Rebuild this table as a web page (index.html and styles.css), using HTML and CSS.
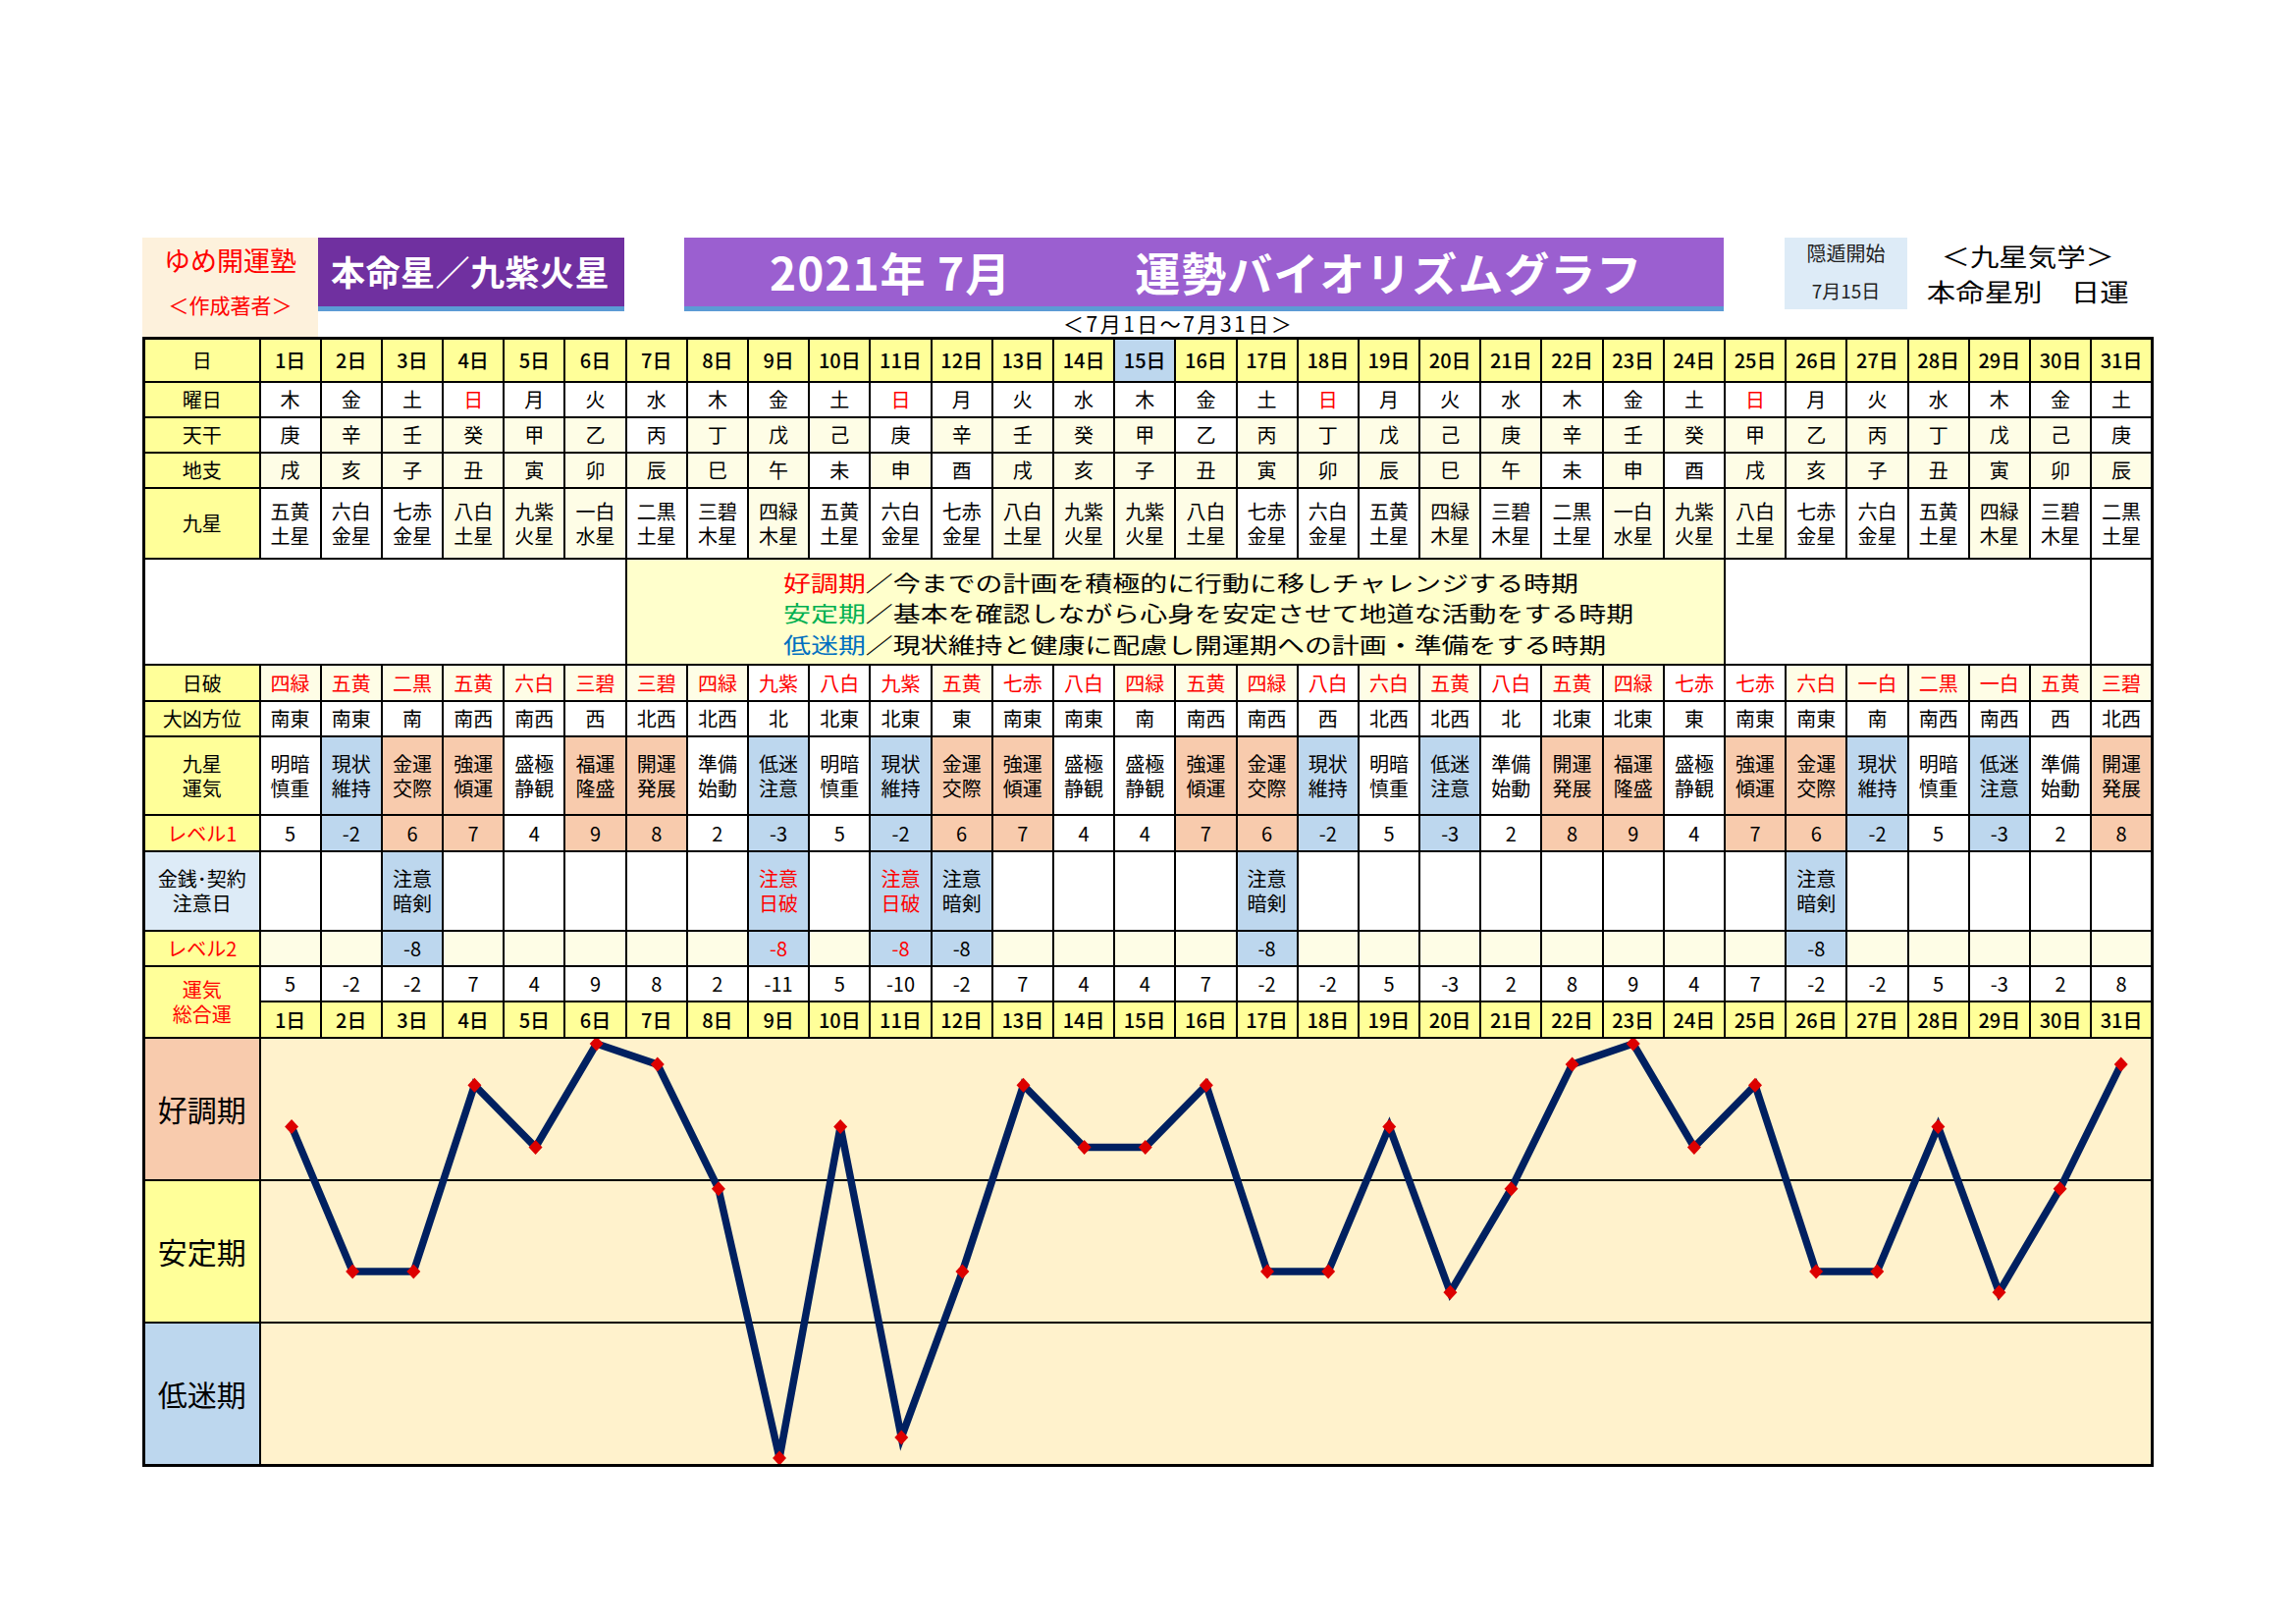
FILE: index.html
```html
<!DOCTYPE html>
<html lang="ja">
<head>
<meta charset="utf-8">
<title>運勢バイオリズムグラフ</title>
<link rel="stylesheet" href="styles.css">
</head>
<body>
<div class="page">
  <div class="header">
    <div class="author">
      <div class="author-name">ゆめ開運塾</div>
      <div class="author-sub">＜作成著者＞</div>
    </div>
    <div class="honmei">本命星／九紫火星</div>
    <div class="title">
      <div class="title-bar"><span class="t1">2021年 7月</span><span class="t2">運勢バイオリズムグラフ</span></div>
      <div class="subtitle">＜7月1日～7月31日＞</div>
    </div>
    <div class="inton">
      <div class="inton-1">隠遁開始</div>
      <div class="inton-2">7月15日</div>
    </div>
    <div class="kyusei">
      <div class="ky-line">＜九星気学＞</div>
      <div class="ky-line">本命星別　日運</div>
    </div>
  </div>

  <table class="grid">
    <colgroup><col class="lab-col"></colgroup>
    <tbody>
      <tr class="r-day">
        <th class="lab">日</th>
        <td>1日</td><td>2日</td><td>3日</td><td>4日</td><td>5日</td><td>6日</td><td>7日</td><td>8日</td><td>9日</td><td>10日</td>
        <td>11日</td><td>12日</td><td>13日</td><td>14日</td><td class="today">15日</td><td>16日</td><td>17日</td><td>18日</td><td>19日</td><td>20日</td>
        <td>21日</td><td>22日</td><td>23日</td><td>24日</td><td>25日</td><td>26日</td><td>27日</td><td>28日</td><td>29日</td><td>30日</td><td>31日</td>
      </tr>
      <tr class="r-36">
        <th class="lab">曜日</th>
        <td>木</td><td>金</td><td>土</td><td class="red">日</td><td>月</td><td>火</td><td>水</td><td>木</td><td>金</td><td>土</td>
        <td class="red">日</td><td>月</td><td>火</td><td>水</td><td>木</td><td>金</td><td>土</td><td class="red">日</td><td>月</td><td>火</td>
        <td>水</td><td>木</td><td>金</td><td>土</td><td class="red">日</td><td>月</td><td>火</td><td>水</td><td>木</td><td>金</td><td>土</td>
      </tr>
      <tr class="r-36">
        <th class="lab">天干</th>
        <td>庚</td><td class="c">辛</td><td class="c">壬</td><td class="c">癸</td><td class="c">甲</td><td class="c">乙</td><td>丙</td><td class="c">丁</td><td class="c">戊</td><td class="c">己</td>
        <td>庚</td><td class="c">辛</td><td class="c">壬</td><td class="c">癸</td><td class="c">甲</td><td>乙</td><td class="c">丙</td><td class="c">丁</td><td class="c">戊</td><td class="c">己</td>
        <td class="c">庚</td><td class="c">辛</td><td class="c">壬</td><td class="c">癸</td><td class="c">甲</td><td class="c">乙</td><td class="c">丙</td><td class="c">丁</td><td class="c">戊</td><td class="c">己</td><td>庚</td>
      </tr>
      <tr class="r-36">
        <th class="lab">地支</th>
        <td class="c">戌</td><td class="c">亥</td><td class="c">子</td><td class="c">丑</td><td class="c">寅</td><td class="c">卯</td><td class="c">辰</td><td class="c">巳</td><td class="c">午</td><td>未</td>
        <td class="c">申</td><td>酉</td><td class="c">戌</td><td class="c">亥</td><td class="c">子</td><td class="c">丑</td><td class="c">寅</td><td class="c">卯</td><td class="c">辰</td><td class="c">巳</td>
        <td class="c">午</td><td>未</td><td class="c">申</td><td>酉</td><td class="c">戌</td><td class="c">亥</td><td class="c">子</td><td class="c">丑</td><td class="c">寅</td><td class="c">卯</td><td class="c">辰</td>
      </tr>
      <tr class="r-star">
        <th class="lab">九星</th>
        <td>五黄<br>土星</td><td>六白<br>金星</td><td>七赤<br>金星</td><td class="c">八白<br>土星</td><td class="c">九紫<br>火星</td><td class="c">一白<br>水星</td><td>二黒<br>土星</td><td>三碧<br>木星</td><td class="c">四緑<br>木星</td><td>五黄<br>土星</td>
        <td>六白<br>金星</td><td>七赤<br>金星</td><td class="c">八白<br>土星</td><td class="c">九紫<br>火星</td><td class="c">九紫<br>火星</td><td class="c">八白<br>土星</td><td>七赤<br>金星</td><td>六白<br>金星</td><td>五黄<br>土星</td><td class="c">四緑<br>木星</td>
        <td>三碧<br>木星</td><td>二黒<br>土星</td><td class="c">一白<br>水星</td><td class="c">九紫<br>火星</td><td class="c">八白<br>土星</td><td>七赤<br>金星</td><td>六白<br>金星</td><td>五黄<br>土星</td><td class="c">四緑<br>木星</td><td>三碧<br>木星</td><td>二黒<br>土星</td>
      </tr>
      <tr class="r-legend">
        <td colspan="7"></td>
        <td colspan="18" class="legend">
          <div class="lg-line"><span class="lg-good">好調期</span>／今までの計画を積極的に行動に移しチャレンジする時期</div>
          <div class="lg-line"><span class="lg-stable">安定期</span>／基本を確認しながら心身を安定させて地道な活動をする時期</div>
          <div class="lg-line"><span class="lg-low">低迷期</span>／現状維持と健康に配慮し開運期への計画・準備をする時期</div>
        </td>
        <td colspan="6"></td>
      </tr>
      <tr class="r-37 r-hakai">
        <th class="lab">日破</th>
        <td class="c">四緑</td><td class="c">五黄</td><td class="c">二黒</td><td class="c">五黄</td><td class="c">六白</td><td class="c">三碧</td><td class="c">三碧</td><td class="c">四緑</td><td>九紫</td><td>八白</td>
        <td>九紫</td><td class="c">五黄</td><td>七赤</td><td>八白</td><td class="c">四緑</td><td class="c">五黄</td><td class="c">四緑</td><td>八白</td><td class="c">六白</td><td class="c">五黄</td>
        <td>八白</td><td class="c">五黄</td><td class="c">四緑</td><td>七赤</td><td>七赤</td><td class="c">六白</td><td class="c">一白</td><td class="c">二黒</td><td class="c">一白</td><td class="c">五黄</td><td class="c">三碧</td>
      </tr>
      <tr class="r-36">
        <th class="lab">大凶方位</th>
        <td>南東</td><td>南東</td><td>南</td><td>南西</td><td>南西</td><td>西</td><td>北西</td><td>北西</td><td>北</td><td>北東</td>
        <td>北東</td><td>東</td><td>南東</td><td>南東</td><td>南</td><td>南西</td><td>南西</td><td>西</td><td>北西</td><td>北西</td>
        <td>北</td><td>北東</td><td>北東</td><td>東</td><td>南東</td><td>南東</td><td>南</td><td>南西</td><td>南西</td><td>西</td><td>北西</td>
      </tr>
      <tr class="r-luck">
        <th class="lab">九星<br>運気</th>
        <td>明暗<br>慎重</td><td class="b">現状<br>維持</td><td class="o">金運<br>交際</td><td class="o">強運<br>傾運</td><td>盛極<br>静観</td><td class="o">福運<br>隆盛</td><td class="o">開運<br>発展</td><td>準備<br>始動</td><td class="b">低迷<br>注意</td><td>明暗<br>慎重</td>
        <td class="b">現状<br>維持</td><td class="o">金運<br>交際</td><td class="o">強運<br>傾運</td><td>盛極<br>静観</td><td>盛極<br>静観</td><td class="o">強運<br>傾運</td><td class="o">金運<br>交際</td><td class="b">現状<br>維持</td><td>明暗<br>慎重</td><td class="b">低迷<br>注意</td>
        <td>準備<br>始動</td><td class="o">開運<br>発展</td><td class="o">福運<br>隆盛</td><td>盛極<br>静観</td><td class="o">強運<br>傾運</td><td class="o">金運<br>交際</td><td class="b">現状<br>維持</td><td>明暗<br>慎重</td><td class="b">低迷<br>注意</td><td>準備<br>始動</td><td class="o">開運<br>発展</td>
      </tr>
      <tr class="r-37">
        <th class="lab red">レベル1</th>
        <td>5</td><td class="b">-2</td><td class="o">6</td><td class="o">7</td><td>4</td><td class="o">9</td><td class="o">8</td><td>2</td><td class="b">-3</td><td>5</td>
        <td class="b">-2</td><td class="o">6</td><td class="o">7</td><td>4</td><td>4</td><td class="o">7</td><td class="o">6</td><td class="b">-2</td><td>5</td><td class="b">-3</td>
        <td>2</td><td class="o">8</td><td class="o">9</td><td>4</td><td class="o">7</td><td class="o">6</td><td class="b">-2</td><td>5</td><td class="b">-3</td><td>2</td><td class="o">8</td>
      </tr>
      <tr class="r-money">
        <th class="lab lab-money">金銭･契約<br>注意日</th>
        <td></td><td></td><td class="b">注意<br>暗剣</td><td></td><td></td><td></td><td></td><td></td><td class="b red">注意<br>日破</td><td></td>
        <td class="b red">注意<br>日破</td><td class="b">注意<br>暗剣</td><td></td><td></td><td></td><td></td><td class="b">注意<br>暗剣</td><td></td><td></td><td></td>
        <td></td><td></td><td></td><td></td><td></td><td class="b">注意<br>暗剣</td><td></td><td></td><td></td><td></td><td></td>
      </tr>
      <tr class="r-36 r-lv2">
        <th class="lab red">レベル2</th>
        <td class="c"></td><td class="c"></td><td class="b">-8</td><td class="c"></td><td class="c"></td><td class="c"></td><td class="c"></td><td class="c"></td><td class="b red">-8</td><td class="c"></td>
        <td class="b red">-8</td><td class="b">-8</td><td class="c"></td><td class="c"></td><td class="c"></td><td class="c"></td><td class="b">-8</td><td class="c"></td><td class="c"></td><td class="c"></td>
        <td class="c"></td><td class="c"></td><td class="c"></td><td class="c"></td><td class="c"></td><td class="b">-8</td><td class="c"></td><td class="c"></td><td class="c"></td><td class="c"></td><td class="c"></td>
      </tr>
      <tr class="r-36">
        <th class="lab red" rowspan="2">運気<br>総合運</th>
        <td>5</td><td>-2</td><td>-2</td><td>7</td><td>4</td><td>9</td><td>8</td><td>2</td><td>-11</td><td>5</td>
        <td>-10</td><td>-2</td><td>7</td><td>4</td><td>4</td><td>7</td><td>-2</td><td>-2</td><td>5</td><td>-3</td>
        <td>2</td><td>8</td><td>9</td><td>4</td><td>7</td><td>-2</td><td>-2</td><td>5</td><td>-3</td><td>2</td><td>8</td>
      </tr>
      <tr class="r-37 r-day2">
        <td>1日</td><td>2日</td><td>3日</td><td>4日</td><td>5日</td><td>6日</td><td>7日</td><td>8日</td><td>9日</td><td>10日</td>
        <td>11日</td><td>12日</td><td>13日</td><td>14日</td><td>15日</td><td>16日</td><td>17日</td><td>18日</td><td>19日</td><td>20日</td>
        <td>21日</td><td>22日</td><td>23日</td><td>24日</td><td>25日</td><td>26日</td><td>27日</td><td>28日</td><td>29日</td><td>30日</td><td>31日</td>
      </tr>
      <tr class="r-graph">
        <th class="glab">
          <div class="bands">
            <div class="band band-good">好調期</div>
            <div class="band band-stable">安定期</div>
            <div class="band band-low">低迷期</div>
          </div>
        </th>
        <td colspan="31" class="graph">
          <svg class="chart" viewBox="0 0 1931 433" preserveAspectRatio="none" xmlns="http://www.w3.org/2000/svg">
            <defs>
              <marker id="dia" viewBox="-8 -8 16 16" markerWidth="16" markerHeight="16" markerUnits="userSpaceOnUse" refX="0" refY="0">
                <path d="M0 -7.5 L7 0 L0 7.5 L-7 0 Z" fill="#dd0000"/>
              </marker>
            </defs>
            <line x1="0" y1="144" x2="1931" y2="144" stroke="#000" stroke-width="2"/>
            <line x1="0" y1="289" x2="1931" y2="289" stroke="#000" stroke-width="2"/>
            <polyline fill="none" stroke="#002060" stroke-width="7.5" marker-start="url(#dia)" marker-mid="url(#dia)" marker-end="url(#dia)"
              points="31.15,89.4 93.45,237.1 155.75,237.1 218.05,47.2 280.35,110.5 342.65,5 404.95,26.1 467.25,152.7 529.55,427 591.85,89.4 654.15,405.9 716.45,237.1 778.75,47.2 841.05,110.5 903.35,110.5 965.65,47.2 1027.95,237.1 1090.25,237.1 1152.55,89.4 1214.85,258.2 1277.15,152.7 1339.45,26.1 1401.75,5 1464.05,110.5 1526.35,47.2 1588.65,237.1 1650.95,237.1 1713.25,89.4 1775.55,258.2 1837.85,152.7 1900.15,26.1"/>
          </svg>
        </td>
      </tr>
    </tbody>
  </table>
</div>
</body>
</html>
```
FILE: styles.css
```css
html, body {
  margin: 0;
  padding: 0;
  background: #ffffff;
}

body {
  font-family: "Noto Sans CJK JP", "Noto Sans", sans-serif;
  color: #000;
}

.page {
  padding: 242px 0 0 145px;
  width: 2049px;
}

/* ---------- header ---------- */
.header {
  display: flex;
  align-items: flex-start;
  height: 101px;
}

.author {
  width: 179px;
  height: 101px;
  background: #fdf1dc;
  color: #ff0000;
  display: flex;
  flex-direction: column;
  align-items: center;
}

.author-name {
  font-size: 27px;
  line-height: 34px;
  margin-top: 6px;
}

.author-sub {
  font-size: 21px;
  line-height: 26px;
  margin-top: 15px;
}

.honmei {
  width: 312px;
  height: 75px;
  box-sizing: border-box;
  background: #7030a0;
  border-bottom: 5px solid #5b9bd5;
  color: #fff;
  font-weight: bold;
  font-size: 35px;
  line-height: 68px;
  padding-left: 13px;
  letter-spacing: 0.5px;
  white-space: nowrap;
}

.title {
  margin-left: 61px;
  width: 1059px;
}

.title-bar {
  height: 75px;
  box-sizing: border-box;
  background: #9b5fd0;
  border-bottom: 5px solid #5b9bd5;
  color: #fff;
  font-weight: bold;
  font-size: 46px;
  line-height: 68px;
  padding-left: 87px;
  white-space: nowrap;
}

.t1 {
  letter-spacing: 1px;
}

.t2 {
  margin-left: 126px;
  letter-spacing: 1px;
}

.subtitle {
  margin-top: 0;
  padding-left: 386px;
  font-size: 21px;
  line-height: 24px;
  letter-spacing: 2.5px;
  white-space: nowrap;
}

.inton {
  margin-left: 62px;
  width: 125px;
  height: 73px;
  background: #ddebf7;
  text-align: center;
  color: #222;
}

.inton-1 {
  font-size: 20px;
  line-height: 32px;
}

.inton-2 {
  font-size: 19px;
  line-height: 44px;
}

.kyusei {
  margin-left: 37px;
  margin-top: 1px;
  font-size: 24.5px;
  line-height: 36px;
  text-align: center;
  white-space: nowrap;
}

.ky-line {
  transform: scaleX(1.2);
  transform-origin: center center;
}

/* ---------- table ---------- */
.grid {
  border-collapse: collapse;
  table-layout: fixed;
  width: 2049px;
  border: 3px solid #000;
}

.lab-col {
  width: 118px;
}

.grid td,
.grid th {
  border: 2px solid #000;
  padding: 0;
  text-align: center;
  vertical-align: middle;
  font-size: 20px;
  font-weight: normal;
  line-height: 25px;
  background: #ffffff;
  overflow: hidden;
  white-space: nowrap;
}

.grid th.lab {
  background: #ffff99;
  font-size: 20px;
}

.grid th.lab-money {
  background: #ddebf7;
  font-size: 20px;
}

.r-day { height: 44px; }
.r-36 { height: 36px; }
.r-37 { height: 37px; }
.r-star { height: 72px; }
.r-legend { height: 108px; }
.r-luck { height: 80px; }
.r-money { height: 81px; }

.r-day td,
.r-day2 td {
  background: #ffff99;
  font-weight: 500;
}

.r-day td.today {
  background: #bdd7ee;
}

.grid td.c { background: #fefde6; }
.grid td.o { background: #f8cbad; }
.grid td.b { background: #bdd7ee; }

.grid .red,
.r-hakai td {
  color: #ff0000;
}

.grid td.legend {
  text-align: left;
  vertical-align: middle;
  padding: 3px 0 0 159px;
  background: #ffffcc;
  font-size: 22px;
  line-height: 31.5px;
}

.lg-line {
  transform: scaleX(1.27);
  transform-origin: left center;
  white-space: nowrap;
}

.lg-good { color: #ff0000; }
.lg-stable { color: #00b050; }
.lg-low { color: #0070c0; }

/* ---------- graph ---------- */
.grid th.glab {
  padding: 0;
  vertical-align: top;
  border-bottom: 3px solid #000;
}

.bands {
  display: flex;
  flex-direction: column;
  height: 433px;
}

.band {
  flex: 1;
  display: flex;
  align-items: center;
  justify-content: center;
  font-size: 30px;
}

.band + .band {
  border-top: 2px solid #000;
}

.band-good { background: #f8cbad; }
.band-stable { background: #ffff99; }
.band-low { background: #bdd7ee; }

.grid td.graph {
  padding: 0;
  vertical-align: top;
  background: #fff2cc;
  border-bottom: 3px solid #000;
}

.chart {
  display: block;
  width: 100%;
  height: 433px;
}
```
